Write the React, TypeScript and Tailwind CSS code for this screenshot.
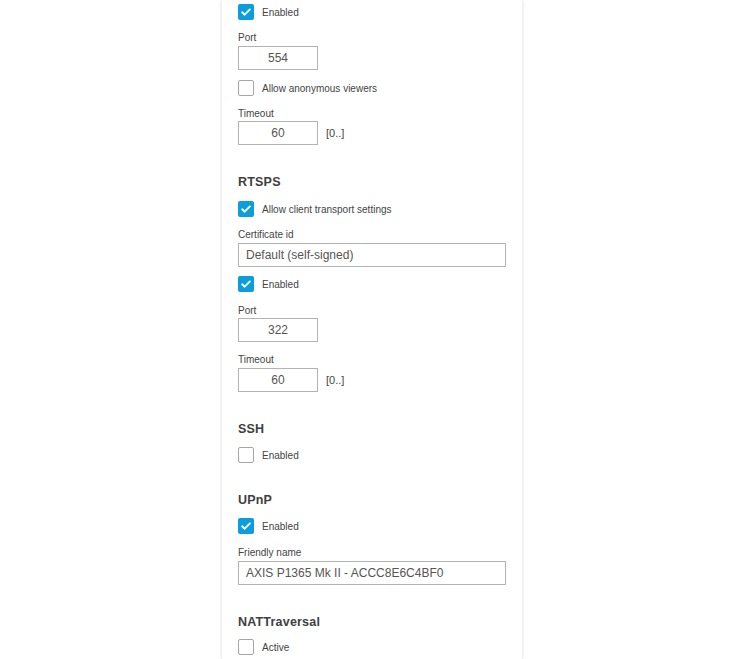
import React from "react";

const font = { fontFamily: '"Liberation Sans", Arial, sans-serif' };

function Check({ checked, label, className = "" }: { checked?: boolean; label: string; className?: string }) {
  return (
    <div className={`flex items-center h-6 ${className}`}>
      {checked ? (
        <span className="w-4 h-4 rounded-[2px] bg-[#0b9ddc] flex items-center justify-center">
          <svg width="12" height="12" viewBox="0 0 12 12" fill="none">
            <path d="M2.2 6.3l2.5 2.4L9.9 3.4" stroke="#fff" strokeWidth="1.9" strokeLinecap="round" strokeLinejoin="round" />
          </svg>
        </span>
      ) : (
        <span className="w-4 h-4 rounded-[2px] border border-[#a6a6a6] bg-white" />
      )}
      <span className="ml-2 text-[10px] text-[#444]">{label}</span>
    </div>
  );
}

function Label({ children, className = "" }: { children: React.ReactNode; className?: string }) {
  return <div className={`text-[10px] leading-[14px] text-[#444] ${className}`}>{children}</div>;
}

function NumInput({ value, range, className = "" }: { value: string; range?: boolean; className?: string }) {
  return (
    <div className={`flex items-center ${className}`}>
      <div className="w-20 h-6 border border-[#b3b3b3] flex items-center justify-center text-[12px] text-[#555]">
        {value}
      </div>
      {range && <span className="ml-2 text-[11px] text-[#444]">[0..]</span>}
    </div>
  );
}

function TextInput({ value, className = "" }: { value: string; className?: string }) {
  return (
    <div className={`h-6 border border-[#b3b3b3] flex items-center px-[7px] text-[12px] text-[#555] ${className}`}>
      {value}
    </div>
  );
}

function Heading({ children, className = "" }: { children: React.ReactNode; className?: string }) {
  return <h3 className={`text-[12.5px] leading-[18px] font-bold text-[#404040] tracking-[0.2px] ${className}`}>{children}</h3>;
}

export default function App() {
  return (
    <div className="min-h-[659px] h-[659px] overflow-hidden bg-white flex" style={font}>
      <div className="ml-[222px] w-[300px] bg-white shadow-[0_0_4px_rgba(0,0,0,0.16)] px-4 flex flex-col">
        <Check checked label="Enabled" />
        <Label className="mt-[7px]">Port</Label>
        <NumInput value="554" className="mt-[1px]" />
        <Check label="Allow anonymous viewers" className="mt-[6px]" />
        <Label className="mt-[7px]">Timeout</Label>
        <NumInput value="60" range className="mt-0" />

        <Heading className="mt-[28px]">RTSPS</Heading>
        <Check checked label="Allow client transport settings" className="mt-[6px]" />
        <Label className="mt-[7px]">Certificate id</Label>
        <TextInput value="Default (self-signed)" className="mt-[1px]" />
        <Check checked label="Enabled" className="mt-[5px]" />
        <Label className="mt-[8px]">Port</Label>
        <NumInput value="322" className="mt-0" />
        <Label className="mt-[11px]">Timeout</Label>
        <NumInput value="60" range className="mt-[1px]" />

        <Heading className="mt-[28px]">SSH</Heading>
        <Check label="Enabled" className="mt-[5px]" />

        <Heading className="mt-[24px]">UPnP</Heading>
        <Check checked label="Enabled" className="mt-[5px]" />
        <Label className="mt-[8px]">Friendly name</Label>
        <TextInput value="AXIS P1365 Mk II - ACCC8E6C4BF0" className="mt-[1px]" />

        <Heading className="mt-[28px]">NATTraversal</Heading>
        <Check label="Active" className="mt-[4px]" />
      </div>
    </div>
  );
}
